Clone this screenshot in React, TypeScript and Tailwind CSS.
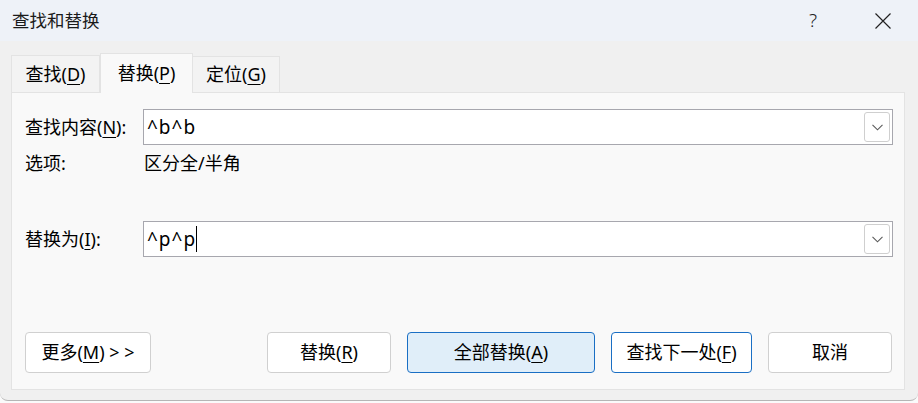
import React from "react";

const font = {
  fontFamily: '"Noto Sans", "Noto Sans CJK SC", sans-serif',
};

function U({ children }: { children: React.ReactNode }) {
  return <span className="underline underline-offset-[3px] decoration-[1px]">{children}</span>;
}

function Chevron() {
  return (
    <svg width="11" height="7" viewBox="0 0 11 7" fill="none">
      <path d="M0.5 0.8 L5.5 5.8 L10.5 0.8" stroke="#5a5a5a" strokeWidth="1.1" />
    </svg>
  );
}

function Combo({ value, caret }: { value: string; caret?: boolean }) {
  return (
    <div className="flex-1 h-[36px] bg-white border border-[#a7a7ae] flex items-center pl-[3px] pr-[2px]">
      <div className="flex-1 flex items-center text-[19px] text-black tracking-[1px]">
        <span>{value}</span>
        {caret && <span className="inline-block w-[1px] h-[26px] bg-black" />}
      </div>
      <div className="w-[26px] h-[30px] border border-[#cfcfcf] rounded-[3px] bg-white flex items-center justify-center">
        <Chevron />
      </div>
    </div>
  );
}

function Btn({
  children,
  w,
  primary,
  blue,
}: {
  children: React.ReactNode;
  w: string;
  primary?: boolean;
  blue?: boolean;
}) {
  const cls = primary
    ? "bg-[#e0eef9] border-[#1a6fc4]"
    : blue
    ? "bg-white border-[#1a6fc4]"
    : "bg-white border-[#d0d0d0]";
  return (
    <div
      className={`h-[41px] ${w} border rounded-[4px] flex items-center justify-center text-[18px] text-black ${cls}`}
    >
      {children}
    </div>
  );
}

export default function App() {
  return (
    <div className="w-[918px] h-[403px] bg-[#fafafa] overflow-hidden" style={font}>
      <div className="w-[918px] h-[401px] bg-[#f0f0f0] rounded-b-[8px] border-b border-[#b5b5b5] flex flex-col">
        {/* title bar */}
        <div className="h-[41px] bg-[#eef2f8] flex items-center pl-[12px] shrink-0">
          <div className="flex-1 text-[17.5px] text-[#1a1a1a]">查找和替换</div>
          <div className="w-[20px] text-center text-[19px] font-light text-[#222] mr-[52px] leading-none">?</div>
          <div className="mr-[27px]">
            <svg width="16" height="16" viewBox="0 0 16 16">
              <path d="M0.5 0.5 L15.5 15.5 M15.5 0.5 L0.5 15.5" stroke="#222" strokeWidth="1.2" />
            </svg>
          </div>
        </div>

        {/* body */}
        <div className="flex-1 flex flex-col pl-[11px] pr-[13px] pt-[12px]">
          {/* tabs */}
          <div className="flex items-end h-[39px] relative z-10">
            <div className="h-[37px] w-[89px] bg-[#f3f3f3] border border-b-0 border-[#e3e3e3] flex items-center justify-center text-[18px] text-black">
              查找(<U>D</U>)
            </div>
            <div className="w-[93px] bg-[#f9f9f9] border border-b-0 border-[#e3e3e3] flex items-center justify-center text-[18px] text-black -mb-[1px] h-[40px]">
              替换(<U>P</U>)
            </div>
            <div className="h-[36px] w-[87px] bg-[#f3f3f3] border border-b-0 border-l-0 border-[#e3e3e3] flex items-center justify-center text-[18px] text-black">
              定位(<U>G</U>)
            </div>
          </div>

          {/* panel */}
          <div className="h-[298px] bg-[#f9f9f9] border border-[#e3e3e3] flex flex-col pt-[16px] pl-[13px] pr-[11px]">
            <div className="flex items-center">
              <div className="w-[118px] text-[18px] text-black">
                查找内容(<U>N</U>):
              </div>
              <Combo value="^b^b" />
            </div>
            <div className="flex items-center mt-[7px] h-[22px] text-[18px] text-black">
              <div className="w-[119px]">选项:</div>
              <div>区分全/半角</div>
            </div>
            <div className="flex items-center mt-[47px]">
              <div className="w-[118px] text-[18px] text-black">
                替换为(<U>I</U>):
              </div>
              <Combo value="^p^p" caret />
            </div>

            <div className="flex items-center mt-[75px] pr-[1px]">
              <Btn w="w-[126px]">
                更多(<U>M</U>) &gt; &gt;
              </Btn>
              <div className="flex-1" />
              <div className="flex items-center gap-[16px]">
                <Btn w="w-[124px]">
                  替换(<U>R</U>)
                </Btn>
                <Btn w="w-[188px]" primary>
                  全部替换(<U>A</U>)
                </Btn>
                <Btn w="w-[141px]" blue>
                  查找下一处(<U>F</U>)
                </Btn>
                <Btn w="w-[124px]">取消</Btn>
              </div>
            </div>
          </div>
        </div>
      </div>
    </div>
  );
}
